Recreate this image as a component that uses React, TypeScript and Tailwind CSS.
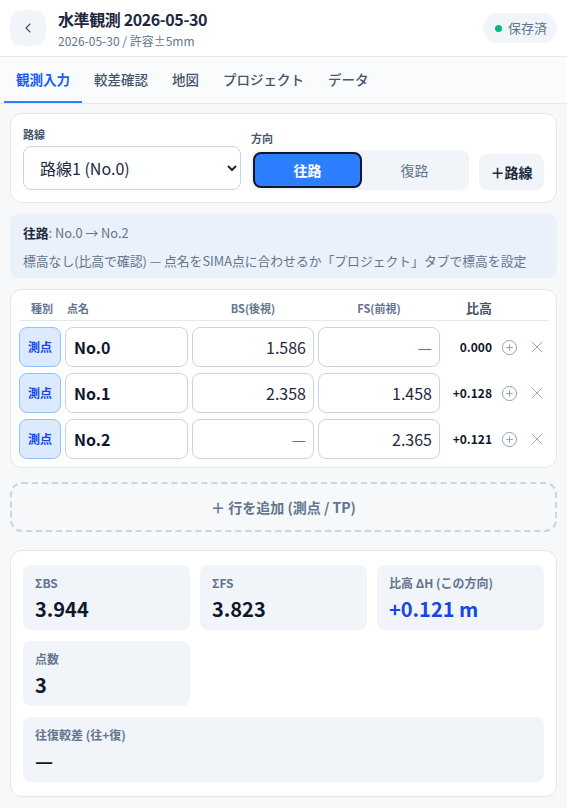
import { useState } from 'react';
import { ChevronLeft, CirclePlus, X } from 'lucide-react';

type Row = { name: string; bs: string; fs: string; dh: string };

const rows: Row[] = [
  { name: 'No.0', bs: '1.586', fs: '', dh: '0.000' },
  { name: 'No.1', bs: '2.358', fs: '1.458', dh: '+0.128' },
  { name: 'No.2', bs: '', fs: '2.365', dh: '+0.121' },
];

const tabs = ['観測入力', '較差確認', '地図', 'プロジェクト', 'データ'];

const Stat = ({ label, value, accent }: { label: string; value: string; accent?: boolean }) => (
  <div className="rounded-lg bg-slate-100 px-3 pt-2.5 pb-[7px]">
    <div className="text-xs leading-4 font-semibold text-slate-500">{label}</div>
    <div className={`mt-1 text-xl leading-7 font-bold ${accent ? 'text-blue-700' : 'text-slate-900'}`}>{value}</div>
  </div>
);

export default function App() {
  const [dir, setDir] = useState<'fwd' | 'back'>('fwd');

  return (
    <div className="min-h-screen bg-[#f6f8fa] font-['Noto_Sans_CJK_JP',sans-serif] text-slate-800">
      {/* header */}
      <header className="flex h-[57px] items-center border-b border-slate-200 bg-white px-2.5">
        <button className="flex h-9 w-9 items-center justify-center rounded-xl bg-slate-100 text-slate-600">
          <ChevronLeft size={16} strokeWidth={1.75} />
        </button>
        <div className="ml-3 flex-1">
          <div className="text-base leading-6 font-bold tracking-tight text-slate-800">水準観測 2026-05-30</div>
          <div className="mt-0.5 text-xs leading-4 text-slate-500">2026-05-30 / 許容±5mm</div>
        </div>
        <div className="flex h-[30px] items-center gap-1.5 rounded-full bg-slate-100 pr-2.5 pl-3">
          <span className="h-[7px] w-[7px] rounded-full bg-emerald-500" />
          <span className="text-[13px] text-slate-500">保存済</span>
        </div>
      </header>

      {/* tabs */}
      <nav className="flex border-b border-slate-200 bg-[#fafbfc] pl-1">
        {tabs.map((t, i) => (
          <button
            key={t}
            className={`h-[46px] border-b-2 px-3 text-[13.5px] ${
              i === 0 ? 'border-blue-500 font-bold text-blue-600' : 'border-transparent font-medium text-slate-600'
            }`}
          >
            {t}
          </button>
        ))}
      </nav>

      <main className="px-2.5 pt-[9px] pb-3">
        {/* route / direction */}
        <section className="flex items-end gap-2.5 rounded-xl border border-slate-200 bg-white p-3">
          <div className="flex-1">
            <div className="text-[11px] leading-4 font-semibold text-slate-600">路線</div>
            <select className="mt-1 h-11 w-full rounded-lg border border-slate-300 bg-white pl-3 text-base text-slate-800">
              <option>路線1 (No.0)</option>
            </select>
          </div>
          <div className="flex-1">
            <div className="text-[11px] leading-4 font-semibold text-slate-600">方向</div>
            <div className="mt-1 flex h-10 rounded-lg bg-slate-100 p-0.5">
              <button
                onClick={() => setDir('fwd')}
                className={`flex-1 rounded-lg text-sm ${
                  dir === 'fwd' ? 'border-2 border-slate-900 bg-blue-500 font-bold text-white' : 'text-slate-500'
                }`}
              >
                往路
              </button>
              <button
                onClick={() => setDir('back')}
                className={`flex-1 rounded-lg text-sm ${
                  dir === 'back' ? 'border-2 border-slate-900 bg-blue-500 font-bold text-white' : 'text-slate-500'
                }`}
              >
                復路
              </button>
            </div>
          </div>
          <button className="h-[36px] w-[65px] rounded-lg bg-slate-100 text-sm font-bold text-slate-800">＋路線</button>
        </section>

        {/* route summary */}
        <section className="mt-[11px] rounded-lg bg-[#eaf1fa] pt-2.5 pr-3 pb-2 pl-[13px] text-[12.8px] leading-[18px] text-slate-500">
          <p>
            <span className="font-bold text-slate-800">往路</span>: No.0 → No.2
          </p>
          <p className="mt-2.5">標高なし(比高で確認) — 点名をSIMA点に合わせるか「プロジェクト」タブで標高を設定</p>
        </section>

        {/* observation table */}
        <section className="mt-[11px] rounded-xl border border-slate-200 bg-white px-2 pb-2">
          <div className="flex items-center border-b border-slate-200 pt-2.5 pb-1 text-[11px] leading-4 font-semibold text-slate-500">
            <span className="w-[42px] pl-1 text-center">種別</span>
            <span className="ml-1 w-[123px] pl-0.5">点名</span>
            <span className="ml-1 w-[122px] text-center">BS(後視)</span>
            <span className="ml-1 w-[122px] text-center">FS(前視)</span>
            <span className="ml-1 w-[50px] pr-0.5 text-right text-[13px] text-slate-600">比高</span>
          </div>
          <div className="flex flex-col gap-1.5 pt-1.5">
            {rows.map((r) => (
              <div key={r.name} className="flex h-10 items-center">
                <button className="h-10 w-[42px] rounded-lg border border-blue-300 bg-blue-100 text-xs font-bold text-blue-700">
                  測点
                </button>
                <div className="ml-1 flex h-10 w-[123px] items-center rounded-lg border border-slate-300 bg-white pl-2 text-base font-bold text-slate-900">
                  {r.name}
                </div>
                <div className="ml-1 flex h-10 w-[122px] items-center justify-end rounded-lg border border-slate-300 bg-white pr-[7px] text-base text-slate-800">
                  {r.bs || <span className="text-slate-500">—</span>}
                </div>
                <div className="ml-1 flex h-10 w-[122px] items-center justify-end rounded-lg border border-slate-300 bg-white pr-[7px] text-base text-slate-800">
                  {r.fs || <span className="text-slate-500">—</span>}
                </div>
                <div className="ml-1 w-[50px] pr-0.5 text-right text-xs font-bold text-slate-900">{r.dh}</div>
                <button className="ml-[5px] flex w-[20px] justify-center text-slate-400">
                  <CirclePlus size={17} strokeWidth={1.4} />
                </button>
                <button className="ml-[8px] flex w-[20px] justify-center text-slate-400">
                  <X size={22} strokeWidth={1.1} />
                </button>
              </div>
            ))}
          </div>
        </section>

        <button className="mt-[14px] flex h-[50px] w-full items-center justify-center rounded-xl border-2 border-dashed border-slate-300 text-sm font-semibold text-slate-500">
          ＋ 行を追加 (測点 / TP)
        </button>

        {/* totals */}
        <section className="mt-[18px] grid grid-cols-3 gap-x-2.5 gap-y-[11px] rounded-xl border border-slate-200 bg-white px-3 pt-[14px] pb-[14px]">
          <Stat label="ΣBS" value="3.944" />
          <Stat label="ΣFS" value="3.823" />
          <Stat label="比高 ΔH (この方向)" value="+0.121 m" accent />
          <Stat label="点数" value="3" />
          <div />
          <div />
          <div className="col-span-3">
            <Stat label="往復較差 (往+復)" value="—" />
          </div>
        </section>
      </main>
    </div>
  );
}
